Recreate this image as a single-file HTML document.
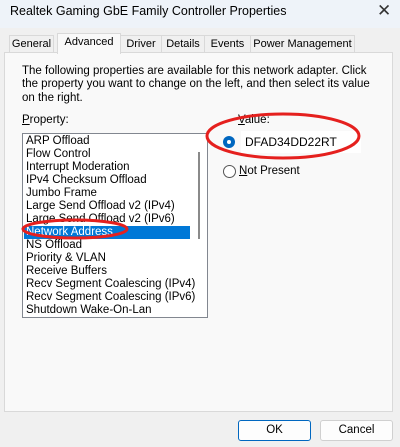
<!DOCTYPE html><html><head><style>
body{margin:0;width:400px;height:447px;background:#f0f0f0;font-family:"Liberation Sans",sans-serif;font-size:11.5px;color:#000;position:relative;overflow:hidden}
.a{position:absolute;white-space:nowrap}
#title{left:0;top:0;width:400px;height:28px;background:#eef3f9}
.tab{position:absolute;top:35px;height:17px;border:1px solid #d9d9d9;border-bottom:none;background:#f0f0f0;line-height:17px;text-align:center;font-size:11px;overflow:hidden}
#panel{left:4px;top:52px;width:387px;height:358px;background:#f9f9f9;border:1px solid #d9d9d9}
#list{left:22px;top:133px;width:184px;height:183px;background:#fff;border:1px solid #828790}
.it{position:absolute;left:3px;height:13px;line-height:13px}
.btn{position:absolute;top:420px;height:19px;border:1px solid #d0d0d0;border-radius:3px;background:#fdfdfd;text-align:center;line-height:19px}
</style></head><body>
<div id="title" class="a"></div>
<div class="a" style="left:10px;top:4px;font-size:12.5px">Realtek Gaming GbE Family Controller Properties</div>
<div class="a" style="left:377px;top:1px;font-size:17px;color:#333">✕</div>
<div class="tab" style="left:9px;width:43px">General</div>
<div class="tab" style="left:57px;width:62px;top:33px;height:20px;background:#f9f9f9;z-index:2">Advanced</div>
<div class="tab" style="left:120px;width:40px">Driver</div>
<div class="tab" style="left:161px;width:42px">Details</div>
<div class="tab" style="left:204px;width:45px">Events</div>
<div class="tab" style="left:250px;width:103px">Power Management</div>
<div id="panel" class="a"></div>
<div class="a" style="left:22px;top:65px;line-height:13.3px">The following properties are available for this network adapter. Click<br>the property you want to change on the left, and then select its value<br>on the right.</div>
<div class="a" style="left:22px;top:114px"><u>P</u>roperty:</div>
<div id="list" class="a">
<div class="it" style="top:1px">ARP Offload</div>
<div class="it" style="top:14px">Flow Control</div>
<div class="it" style="top:27px">Interrupt Moderation</div>
<div class="it" style="top:40px">IPv4 Checksum Offload</div>
<div class="it" style="top:53px">Jumbo Frame</div>
<div class="it" style="top:66px">Large Send Offload v2 (IPv4)</div>
<div class="it" style="top:79px">Large Send Offload v2 (IPv6)</div>
<div class="it" style="top:92px;left:1px;width:164px;background:#0078d7;color:#fff;padding-left:2px">Network Address</div>
<div class="it" style="top:105px">NS Offload</div>
<div class="it" style="top:118px">Priority &amp; VLAN</div>
<div class="it" style="top:131px">Receive Buffers</div>
<div class="it" style="top:144px">Recv Segment Coalescing (IPv4)</div>
<div class="it" style="top:157px">Recv Segment Coalescing (IPv6)</div>
<div class="it" style="top:170px">Shutdown Wake-On-Lan</div>
<div class="a" style="left:175px;top:18px;width:2px;height:87px;background:#8a8a8a"></div>
</div>
<div class="a" style="left:238px;top:114px"><u>V</u>alue:</div>
<div class="a" style="left:241px;top:131px;width:120px;height:22px;background:#fff"></div>
<div class="a" style="left:245px;top:135px;font-size:12px">DFAD34DD22RT</div>
<div class="a" style="left:223px;top:136px;width:12px;height:12px;border-radius:50%;background:#0067c0"></div>
<div class="a" style="left:227px;top:140px;width:4px;height:4px;border-radius:50%;background:#fff"></div>
<div class="a" style="left:223px;top:165px;width:11px;height:11px;border-radius:50%;border:1px solid #555;background:#fff"></div>
<div class="a" style="left:239px;top:165px"><u>N</u>ot Present</div>
<svg class="a" style="left:0;top:0" width="400" height="447"><ellipse cx="283" cy="136" rx="76" ry="22" fill="none" stroke="#e5201e" stroke-width="3"/><ellipse cx="75" cy="229" rx="52" ry="9" fill="none" stroke="#e5201e" stroke-width="3"/></svg>
<div class="btn" style="left:238px;width:71px;border:1px solid #0067c0">OK</div>
<div class="btn" style="left:320px;width:71px">Cancel</div>
</body></html>
